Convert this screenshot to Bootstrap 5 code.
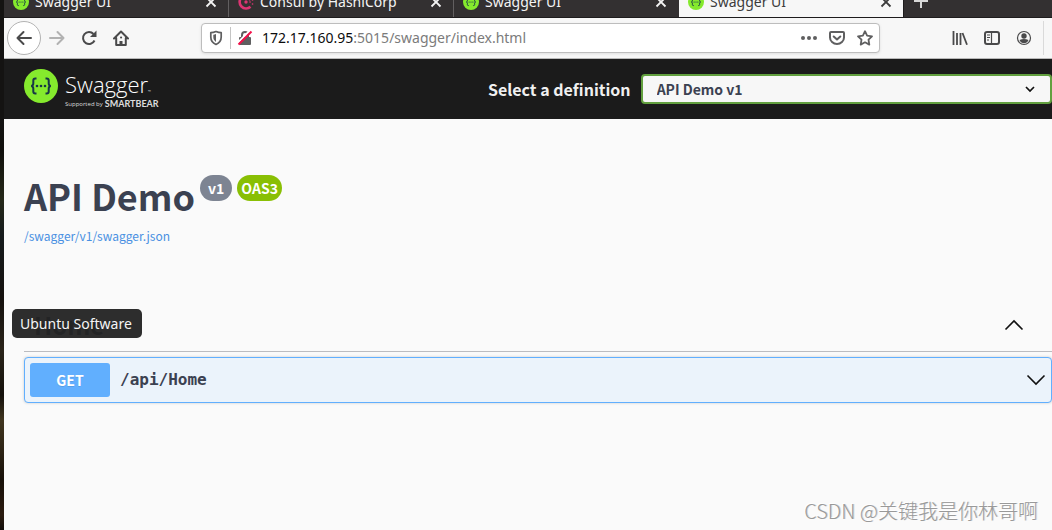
<!DOCTYPE html>
<html lang="en">
<head>
<meta charset="utf-8">
<meta name="viewport" content="width=device-width, initial-scale=1">
<title>Swagger UI</title>
<link href="https://cdn.jsdelivr.net/npm/bootstrap@5.3.0/dist/css/bootstrap.min.css" rel="stylesheet">
<style>
  body { background: #fafafa; color: #3b4151; font-family: "Noto Sans CJK SC", sans-serif; overflow: hidden; }
  svg { display: block; flex: none; }
  button { border: 0; background: none; padding: 0; color: inherit; }
  .chrome { font-family: "Noto Sans", sans-serif; color: #4a4a4b; }
  .desktop-edge { width: 4px; background: linear-gradient(#141312 0, #141312 120px, #100f0c 150px, #252819 200px, #161b1d 235px, #15110e 300px, #2a241a 350px, #14110c 395px, #40351f 420px, #2d2415 450px, #171009 480px, #2b1b0f 515px, #120d0a 530px); }
  .tab-strip { height: 18px; background: #333031; overflow: hidden; border-bottom: 1px solid #1e1c1d; }
  .browser-tab { flex: 0 1 225px; min-width: 0; height: 32px; margin-bottom: -1px; padding: 0 11px 0 9px; gap: 6px; border-right: 1px solid #625f60; color: #f4f4f4; }
  .browser-tab.no-line { border-right-color: transparent; }
  .browser-tab.current { background: #f7f7f7; color: #3c3c3c; border-right-color: #1e1c1d; position: relative; }
  .tab-title { font-size: 14px; line-height: 20px; }
  .new-tab { width: 34px; height: 32px; color: #d8d8d8; }
  .toolbar { height: 41px; background: #f7f7f7; border-bottom: 1px solid #b9b9b9; padding: 0 8px 0 3px; }
  .tool { width: 32px; height: 32px; }
  .back { width: 34px; height: 34px; border: 1px solid #b3b3b3; border-radius: 50%; background: #fff; }
  .forward { color: #b2b2b2; }
  .url-bar { height: 30px; margin: 0 64px; background: #fff; border: 1px solid #bdbdbd; border-radius: 4px; box-shadow: 0 1px 3px #0000001a; min-width: 0; }
  .url-tool { width: 28px; height: 28px; color: #5f5f60; }
  .url-line { width: 1px; height: 22px; background: #c4c4c4; }
  .url-text { font-size: 14px; line-height: 20px; color: #7b7b7b; text-decoration: none; margin-left: 3px; }
  .url-text span { color: #0c0c0d; }
  .tool-line { width: 1px; height: 34px; background: #dadada; margin-left: 3px; }
  .topbar { background: #1b1b1b; height: 60px; padding: 10px 0 0 20px; }
  .brand { gap: 7px; color: #fff; text-decoration: none; font-family: "Open Sans", sans-serif; }
  .brand-name { font-size: 22px; font-weight: 300; line-height: 30px; height: 30px; }
  .brand-tm { font-size: 4px; line-height: 4px; }
  .brand-by { font-size: 6px; line-height: 10px; height: 10px; color: #ddd; }
  .brand-by b { font: 700 9px/10px Lato, sans-serif; margin-left: 2px; }
  .definition { width: 564px; height: 40px; }
  .definition label { font-size: 16px; font-weight: 700; line-height: 24px; color: #f0f0f0; margin-right: 10px; }
  .definition select { height: 30px; padding: 0 40px 0 14px; border: 2px solid #62a03f; border-radius: 4px; color: #3b4151; font-size: 14px; font-weight: 700; line-height: 24px;
    background: #f7f7f7 url("data:image/svg+xml,%3Csvg xmlns='http://www.w3.org/2000/svg' viewBox='0 0 12 12'%3E%3Cpath d='M2 4l4 4 4-4' fill='none' stroke='%23111' stroke-width='1.7'/%3E%3C/svg%3E") right 14px center / 12px 12px no-repeat; }
  .api-info { padding: 49px 0 0 20px; }
  .api-heading { gap: 5px; }
  .api-title { font-size: 36px; font-weight: 700; line-height: 54px; margin: 0; }
  .version { height: 26px; border-radius: 13px; background: #7d8492; color: #fff; font-size: 14px; font-weight: 700; line-height: 26px; padding: 0 8px; margin-top: 7px; }
  .version.oas { background: #89bf04; padding: 0 4px; }
  .spec-link { font-size: 12px; line-height: 24px; color: #4990e2; text-decoration: none; }
  .api-tags { margin: 50px 0 0 20px; }
  .tag-head { height: 54px; border-bottom: 1px solid #bbbcc0; padding: 0 28px 0 10px; }
  .tag-head h2 { font-size: 24px; font-weight: 700; line-height: 36px; margin: 0; }
  .operation { height: 46px; margin-top: 5px; padding: 0 5px; border: 1px solid #61affe; border-radius: 4px; background: #ebf3fb; box-shadow: 0 0 3px #00000030; color: #3b4151; }
  .verb { width: 80px; height: 34px; border-radius: 3px; background: #61affe; color: #fff; font-size: 14px; font-weight: 700; line-height: 34px; text-shadow: 0 1px 0 #0000001a; }
  .route { font-family: "DejaVu Sans Mono", monospace; font-size: 16px; font-weight: 700; line-height: 26px; margin-left: 10px; }
  .dock-tip { position: absolute; left: 12px; top: 309px; padding: 0 10px 0 8px; border-radius: 5px; background: #232323f3; color: #f5f5f5; font: 14px/29px "Noto Sans", sans-serif; }
  .watermark { position: absolute; right: 14px; bottom: 4px; font-size: 20px; line-height: 30px; color: #999; text-shadow: -1px -1px 0 #fff, 1px 0 0 #8f8f8f55; font-weight: 300; }
</style>
</head>
<body>
<svg class="d-none" aria-hidden="true">
  <symbol id="swagger" viewBox="0 0 34 34">
    <circle cx="17" cy="17" r="17" fill="#85ea2d"/>
    <path d="M12.500 9.500h-1.200q-2 0-2 2v3q0 2-2 2.500 2 .5 2 2.500v3q0 2 2 2h1.200M21.500 9.500h1.200q2 0 2 2v3q0 2 2 2.500-2 .5-2 2.500v3q0 2-2 2h-1.200" fill="none" stroke="#173647" stroke-width="2"/>
    <circle cx="13" cy="17" r="1.300" fill="#173647"/><circle cx="17" cy="17" r="1.300" fill="#173647"/><circle cx="21" cy="17" r="1.300" fill="#173647"/>
  </symbol>
  <symbol id="close" viewBox="0 0 12 12"><path d="M1.500 1.500l9 9m0-9l-9 9" stroke="currentColor" stroke-width="1.800" fill="none"/></symbol>
</svg>
<div class="d-flex min-vh-100">
  <div class="desktop-edge flex-shrink-0"></div>
  <div class="flex-grow-1 min-w-0">
    <header class="chrome">
      <div class="tab-strip d-flex align-items-end">
        <div class="browser-tab d-flex align-items-center">
          <svg width="16" height="16"><use href="#swagger"/></svg>
          <span class="tab-title flex-grow-1 text-truncate">Swagger UI</span>
          <button aria-label="Close tab"><svg width="12" height="12"><use href="#close"/></svg></button>
        </div>
        <div class="browser-tab d-flex align-items-center">
          <svg width="16" height="16" viewBox="0 0 16 16" fill="none" stroke="#dc3472"><path d="M12.500 3.200A6.500 6.500 0 1 0 12.500 12.800" stroke-width="2.600"/><circle cx="8" cy="8" r="1.700" fill="#dc3472" stroke="none"/><path d="M12 8h.1M14.500 6h.1M14.500 10h.1M11.500 5.800h.1" stroke-width="1.600" stroke-linecap="round"/></svg>
          <span class="tab-title flex-grow-1 text-truncate">Consul by HashiCorp</span>
          <button aria-label="Close tab"><svg width="12" height="12"><use href="#close"/></svg></button>
        </div>
        <div class="browser-tab no-line d-flex align-items-center">
          <svg width="16" height="16"><use href="#swagger"/></svg>
          <span class="tab-title flex-grow-1 text-truncate">Swagger UI</span>
          <button aria-label="Close tab"><svg width="12" height="12"><use href="#close"/></svg></button>
        </div>
        <div class="browser-tab current d-flex align-items-center">
          <svg width="16" height="16"><use href="#swagger"/></svg>
          <span class="tab-title flex-grow-1 text-truncate">Swagger UI</span>
          <button aria-label="Close tab"><svg width="12" height="12"><use href="#close"/></svg></button>
        </div>
        <button class="new-tab d-flex align-items-center justify-content-center" aria-label="New tab"><svg width="14" height="14" viewBox="0 0 14 14"><path d="M7 0v14M0 7h14" stroke="currentColor" stroke-width="2"/></svg></button>
      </div>
      <div class="toolbar d-flex align-items-center">
        <button class="back flex-shrink-0 d-flex align-items-center justify-content-center" aria-label="Back"><svg width="16" height="16" viewBox="0 0 16 16" fill="none" stroke="currentColor" stroke-width="2" stroke-linecap="round" stroke-linejoin="round"><path d="M15 8H1.500M7.500 2l-6 6 6 6"/></svg></button>
        <button class="tool forward d-flex align-items-center justify-content-center" aria-label="Forward"><svg width="16" height="16" viewBox="0 0 16 16" fill="none" stroke="currentColor" stroke-width="2" stroke-linecap="round" stroke-linejoin="round"><path d="M1 8h13.500M8.500 2l6 6-6 6"/></svg></button>
        <button class="tool d-flex align-items-center justify-content-center" aria-label="Reload"><svg width="16" height="16" viewBox="0 0 16 16" fill="none" stroke="currentColor" stroke-width="2"><path d="M13.500 10.500A6 6 0 1 1 12.500 4"/><path d="M15.500 .5v6.500H9z" fill="currentColor" stroke="none"/></svg></button>
        <button class="tool d-flex align-items-center justify-content-center" aria-label="Home"><svg width="16" height="16" viewBox="0 0 16 16" fill="none" stroke="currentColor" stroke-width="2" stroke-linejoin="round" stroke-linecap="round"><path d="M1 8.500l7-7 7 7M3.200 8v7h9.600V8"/><path d="M8 15v-4" stroke-width="3" stroke-linecap="butt"/><path d="M8 7.500h.1"/></svg></button>
        <div class="url-bar flex-grow-1 d-flex align-items-center">
          <button class="url-tool d-flex align-items-center justify-content-center" aria-label="Tracking protection"><svg width="14" height="16" viewBox="0 0 14 16"><path d="M7 1.500c2 .9 3.500 1.200 5.200 1.200V7c0 3.500-1.800 6-5.200 7.500C3.600 13 1.800 10.500 1.800 7V2.700C3.500 2.700 5 2.400 7 1.500z" fill="none" stroke="currentColor" stroke-width="1.700" stroke-linejoin="round"/><path d="M7 4v8C5 10.500 4.300 9 4.300 7V4.700C5.300 4.600 6 4.400 7 4z" fill="currentColor"/></svg></button>
          <div class="url-line"></div>
          <button class="url-tool d-flex align-items-center justify-content-center" aria-label="Connection not secure"><svg width="16" height="16" viewBox="0 0 16 16"><path d="M5 8V5a3 3 0 0 1 6 0v3" fill="none" stroke="currentColor" stroke-width="2"/><rect x="2" y="7" width="12" height="8" rx="1" fill="currentColor"/><path d="M1 12.500L12.500 1" stroke="#fff" stroke-width="2"/><path d="M1.500 14.500L14.500 1.500" stroke="#f5104a" stroke-width="2"/></svg></button>
          <a class="url-text flex-grow-1 text-truncate" href="#"><span>172.17.160.95</span>:5015/swagger/index.html</a>
          <button class="url-tool d-flex align-items-center justify-content-center" aria-label="Page actions"><svg width="16" height="16" viewBox="0 0 16 16" fill="currentColor"><circle cx="2" cy="8" r="2"/><circle cx="8" cy="8" r="2"/><circle cx="14" cy="8" r="2"/></svg></button>
          <button class="url-tool d-flex align-items-center justify-content-center" aria-label="Save to Pocket"><svg width="16" height="16" viewBox="0 0 16 16" fill="none" stroke="currentColor" stroke-width="2" stroke-linecap="round" stroke-linejoin="round"><path d="M2 2h12q1 0 1 1v4.500a7 6.500 0 0 1-14 0V3q0-1 1-1z"/><path d="M4.700 6.500L8 9.500l3.300-3"/></svg></button>
          <button class="url-tool d-flex align-items-center justify-content-center" aria-label="Bookmark this page"><svg width="16" height="16" viewBox="0 0 16 16" fill="none" stroke="currentColor" stroke-width="1.800" stroke-linejoin="round"><path d="M8 1.200l2.100 4.400 4.900.7-3.500 3.400.8 4.900L8 12.300l-4.300 2.300.8-4.900L1 6.300l4.900-.7z"/></svg></button>
        </div>
        <button class="tool d-flex align-items-center justify-content-center" aria-label="Library"><svg width="16" height="16" viewBox="0 0 16 16" stroke="currentColor" stroke-width="1.800"><path d="M1.500 1v14M5 3v12M8.500 3v12M10.500 3l4.500 11.800"/></svg></button>
        <button class="tool d-flex align-items-center justify-content-center" aria-label="Sidebars"><svg width="16" height="16" viewBox="0 0 16 16" fill="none" stroke="currentColor"><rect x="1" y="2" width="14" height="12" rx="2" stroke-width="2"/><path d="M7.500 2v12" stroke-width="1.200"/><path d="M3 5h3M3 7.500h3M3 10h2" stroke-width="1"/></svg></button>
        <button class="tool d-flex align-items-center justify-content-center" aria-label="Account"><svg width="16" height="16" viewBox="0 0 16 16"><circle cx="8" cy="8" r="6.500" fill="none" stroke="currentColor" stroke-width="1.200"/><circle cx="8" cy="6" r="2.700" fill="currentColor"/><path d="M3.500 10q4.500-2 9 0-1.500 3.200-4.500 3.200T3.500 10z" fill="currentColor"/></svg></button>
        <div class="tool-line"></div>
      </div>
    </header>
    <nav class="topbar d-flex align-items-start justify-content-between" aria-label="API definition">
      <a class="brand d-flex" href="#">
        <svg width="34" height="34"><use href="#swagger"/></svg>
        <span class="d-flex flex-column">
          <span class="brand-name">Swagger<span class="brand-tm">™</span></span>
          <span class="brand-by d-flex align-items-center">Supported by <b>SMARTBEAR</b></span>
        </span>
      </a>
      <form class="definition d-flex align-items-center">
        <label for="definition" class="text-nowrap">Select a definition</label>
        <select id="definition" class="form-select"><option>API Demo v1</option></select>
      </form>
    </nav>
    <main>
      <section class="api-info">
        <div class="api-heading d-flex align-items-start">
          <h1 class="api-title">API Demo</h1>
          <span class="version">v1</span>
          <span class="version oas">OAS3</span>
        </div>
        <a class="spec-link d-inline-block" href="#">/swagger/v1/swagger.json</a>
      </section>
      <section class="api-tags">
        <div class="tag-head d-flex align-items-center justify-content-between">
          <h2>Home</h2>
          <button aria-label="Collapse Home"><svg width="20" height="20" viewBox="0 0 20 20"><path d="M1.500 14.500L10 6l8.500 8.500" fill="none" stroke="#111" stroke-width="1.600"/></svg></button>
        </div>
        <button class="operation w-100 d-flex align-items-center text-start">
          <span class="verb text-center">GET</span>
          <span class="route flex-grow-1">/api/Home</span>
          <svg width="20" height="20" viewBox="0 0 20 20"><path d="M1.500 5.500L10 14l8.500-8.500" fill="none" stroke="#111" stroke-width="1.600"/></svg>
        </button>
      </section>
    </main>
  </div>
</div>
<div class="dock-tip" role="tooltip">Ubuntu Software</div>
<div class="watermark">CSDN @关键我是你林哥啊</div>
<script src="https://cdn.jsdelivr.net/npm/bootstrap@5.3.0/dist/js/bootstrap.bundle.min.js"></script>
</body>
</html>
